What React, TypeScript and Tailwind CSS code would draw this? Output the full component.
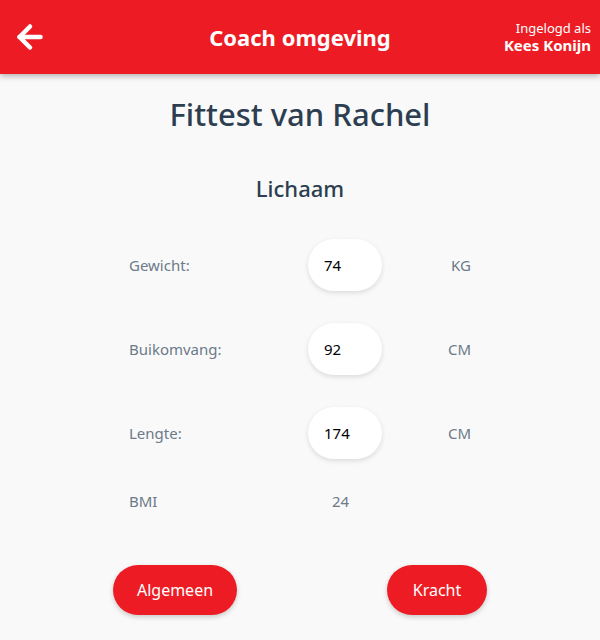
import { ArrowLeft } from "lucide-react";

const rows = [
    { label: "Gewicht:", value: "74", unit: "KG" },
    { label: "Buikomvang:", value: "92", unit: "CM" },
    { label: "Lengte:", value: "174", unit: "CM" },
];

export default function App() {
    return (
        <div
            className="min-h-[640px] bg-[#f9f9f9] flex flex-col"
            style={{ fontFamily: '"Noto Sans", "Open Sans", sans-serif' }}
        >
            <header className="h-[74px] bg-[#ed1c24] shadow-[0_2px_6px_rgba(0,0,0,0.3)] flex items-center justify-between pl-3 pr-[9px] relative">
                <ArrowLeft className="w-[36px] h-[36px] text-white" strokeWidth={3} />
                <h1 className="absolute left-1/2 -translate-x-1/2 text-white font-bold text-[22px]">
                    Coach omgeving
                </h1>
                <div className="flex flex-col items-end text-white leading-tight">
                    <span className="text-[13px]">Ingelogd als</span>
                    <span className="text-[15px] font-bold">Kees Konijn</span>
                </div>
            </header>

            <h2 className="mt-[20px] text-center text-[31px] leading-[40px] font-medium text-[#2c3e50]">
                Fittest van Rachel
            </h2>
            <h3 className="mt-[38px] text-center text-[22px] leading-[32px] font-medium text-[#2c3e50]">
                Lichaam
            </h3>

            <div className="mx-auto w-[374px] mt-[35px] flex flex-col">
                <div className="px-4 flex flex-col gap-8">
                    {rows.map(({ label, value, unit }) => (
                        <div
                            key={label}
                            className="grid grid-cols-[179px_74px_1fr] items-center text-[15px] text-[#6c7a89]"
                        >
                            <span>{label}</span>
                            <div className="h-[52px] rounded-full bg-white shadow-[0_2px_5px_rgba(0,0,0,0.12)] flex items-center pl-4 text-black">
                                {value}
                            </div>
                            <span className="text-right">{unit}</span>
                        </div>
                    ))}
                    <div className="grid grid-cols-[179px_74px_1fr] items-center text-[15px] leading-[20px] text-[#6c7a89]">
                        <span>BMI</span>
                        <span className="pl-6">24</span>
                        <span />
                    </div>
                </div>

                <div className="mt-[54px] flex justify-between">
                    <button className="h-[50px] w-[124px] rounded-full bg-[#ed1c24] text-white text-[16px] shadow-[0_2px_5px_rgba(0,0,0,0.2)]">
                        Algemeen
                    </button>
                    <button className="h-[50px] w-[100px] rounded-full bg-[#ed1c24] text-white text-[16px] shadow-[0_2px_5px_rgba(0,0,0,0.2)]">
                        Kracht
                    </button>
                </div>
            </div>
        </div>
    );
}
